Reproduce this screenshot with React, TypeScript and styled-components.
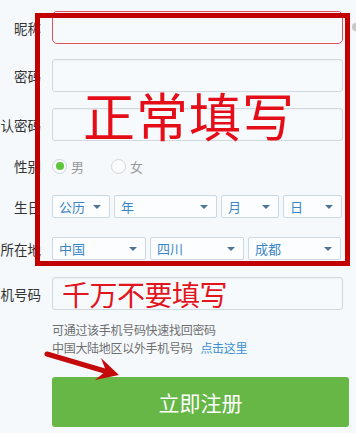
import React from 'react';
import styled, { createGlobalStyle } from 'styled-components';

const GlobalStyle = createGlobalStyle`
  html, body {
    margin: 0;
    padding: 0;
    background: #f5f9fc;
  }
  body {
    font-family: "Noto Sans CJK SC", "Noto Sans", sans-serif;
    overflow: hidden;
  }
`;

const Page = styled.div`
  position: relative;
  width: 356px;
  height: 433px;
  overflow: hidden;
  background: #f5f9fc;
`;

const Form = styled.div`
  display: flex;
  flex-direction: column;
`;

const Row = styled.div<{ $top: number; $height: number }>`
  display: flex;
  align-items: center;
  margin-top: ${({ $top }) => $top}px;
  height: ${({ $height }) => $height}px;
`;

const Label = styled.div`
  width: 41px;
  flex-shrink: 0;
  display: flex;
  justify-content: flex-end;
  white-space: nowrap;
  margin-right: 11px;
  font-size: 13.5px;
  color: #333;
`;

const TextBox = styled.div<{ $focus?: boolean }>`
  box-sizing: border-box;
  width: 291px;
  height: 100%;
  border: 1px solid ${({ $focus }) => ($focus ? '#e0525c' : '#d0d9e0')};
  border-radius: ${({ $focus }) => ($focus ? '5px' : '3px')};
  background: #f7fafd;
  box-shadow: inset 0 1px 2px rgba(0, 0, 0, 0.04);
  display: flex;
  align-items: center;
  padding-left: 9px;
  overflow: hidden;
`;

const WarnText = styled.span`
  font-size: 28px;
  line-height: 1;
  color: #e3151c;
  letter-spacing: -0.5px;
`;

const Radio = styled.span<{ $checked?: boolean }>`
  box-sizing: border-box;
  width: 15px;
  height: 15px;
  border-radius: 50%;
  border: 1px solid #cfd6dc;
  background: #fbfcfd;
  display: flex;
  align-items: center;
  justify-content: center;
  &::after {
    content: '';
    width: 8px;
    height: 8px;
    border-radius: 50%;
    background: ${({ $checked }) => ($checked ? '#5ec63c' : 'transparent')};
  }
`;

const RadioGroup = styled.div`
  display: flex;
  align-items: center;
  gap: 4px;
  margin-right: 27px;
  font-size: 13px;
  color: #999;
`;

const SelectGroup = styled.div`
  display: flex;
  gap: 4px;
  height: 100%;
`;

const Select = styled.div<{ $w: number }>`
  box-sizing: border-box;
  width: ${({ $w }) => $w}px;
  height: 100%;
  border: 1px solid #ccd8e2;
  border-radius: 2px;
  background: #fbfdfe;
  display: flex;
  align-items: center;
  justify-content: space-between;
  padding: 0 8px 0 6px;
  font-size: 13px;
  color: #3b86c6;
  &::after {
    content: '';
    width: 0;
    height: 0;
    border-left: 4px solid transparent;
    border-right: 4px solid transparent;
    border-top: 4px solid #4f7594;
  }
`;

const Hints = styled.div`
  margin: 11px 0 0 52px;
  font-size: 12px;
  line-height: 18px;
  color: #6f6f6f;
  letter-spacing: -0.3px;
`;

const HintLink = styled.span`
  color: #3a8ed6;
  margin-left: 8px;
`;

const SubmitButton = styled.button`
  margin: 20px 0 0 52px;
  width: 297px;
  height: 50px;
  border: none;
  border-radius: 3px;
  background: #66b746;
  color: #fff;
  font-family: "Noto Sans CJK SC", sans-serif;
  font-size: 21px;
  cursor: pointer;
`;

const Annotation = styled.div`
  position: absolute;
  left: 35px;
  top: 13px;
  width: 315px;
  height: 253px;
  box-sizing: border-box;
  border: 5px solid #c20000;
  pointer-events: none;
`;

const AnnotationText = styled.div`
  margin: 71px 0 0 43px;
  font-size: 52px;
  line-height: 1;
  color: #e50d17;
  letter-spacing: 1px;
  white-space: nowrap;
`;

const Arrow = styled.svg`
  position: absolute;
  left: 0;
  top: 0;
  pointer-events: none;
`;

const EdgeDot = styled.span`
  position: absolute;
  left: 352px;
  top: 23px;
  width: 7px;
  height: 8px;
  border-radius: 50%;
  background: #c8c8c8;
`;

export default function App() {
  return (
    <Page>
      <GlobalStyle />
      <Form>
        <Row $top={11} $height={33}>
          <Label>昵称</Label>
          <TextBox $focus />
        </Row>
        <Row $top={15} $height={33}>
          <Label>密码</Label>
          <TextBox />
        </Row>
        <Row $top={16} $height={33}>
          <Label>确认密码</Label>
          <TextBox />
        </Row>
        <Row $top={13} $height={24}>
          <Label>性别</Label>
          <RadioGroup>
            <Radio $checked />男
          </RadioGroup>
          <RadioGroup>
            <Radio />女
          </RadioGroup>
        </Row>
        <Row $top={17} $height={23}>
          <Label>生日</Label>
          <SelectGroup>
            <Select $w={58}>公历</Select>
            <Select $w={103}>年</Select>
            <Select $w={58}>月</Select>
            <Select $w={59}>日</Select>
          </SelectGroup>
        </Row>
        <Row $top={19} $height={23}>
          <Label>所在地</Label>
          <SelectGroup>
            <Select $w={94}>中国</Select>
            <Select $w={94}>四川</Select>
            <Select $w={93}>成都</Select>
          </SelectGroup>
        </Row>
        <Row $top={17} $height={33}>
          <Label>手机号码</Label>
          <TextBox>
            <WarnText>千万不要填写</WarnText>
          </TextBox>
        </Row>
        <Hints>
          <div>可通过该手机号码快速找回密码</div>
          <div>
            中国大陆地区以外手机号码<HintLink>点击这里</HintLink>
          </div>
        </Hints>
        <SubmitButton>立即注册</SubmitButton>
      </Form>
      <Annotation>
        <AnnotationText>正常填写</AnnotationText>
      </Annotation>
      <Arrow width="356" height="433" viewBox="0 0 356 433">
        <line x1="47" y1="354" x2="108" y2="372" stroke="#c40a0a" strokeWidth="5" strokeLinecap="round" />
        <polygon points="119,375 101,358 106,371 95,380" fill="#c40a0a" />
      </Arrow>
      <EdgeDot />
    </Page>
  );
}
